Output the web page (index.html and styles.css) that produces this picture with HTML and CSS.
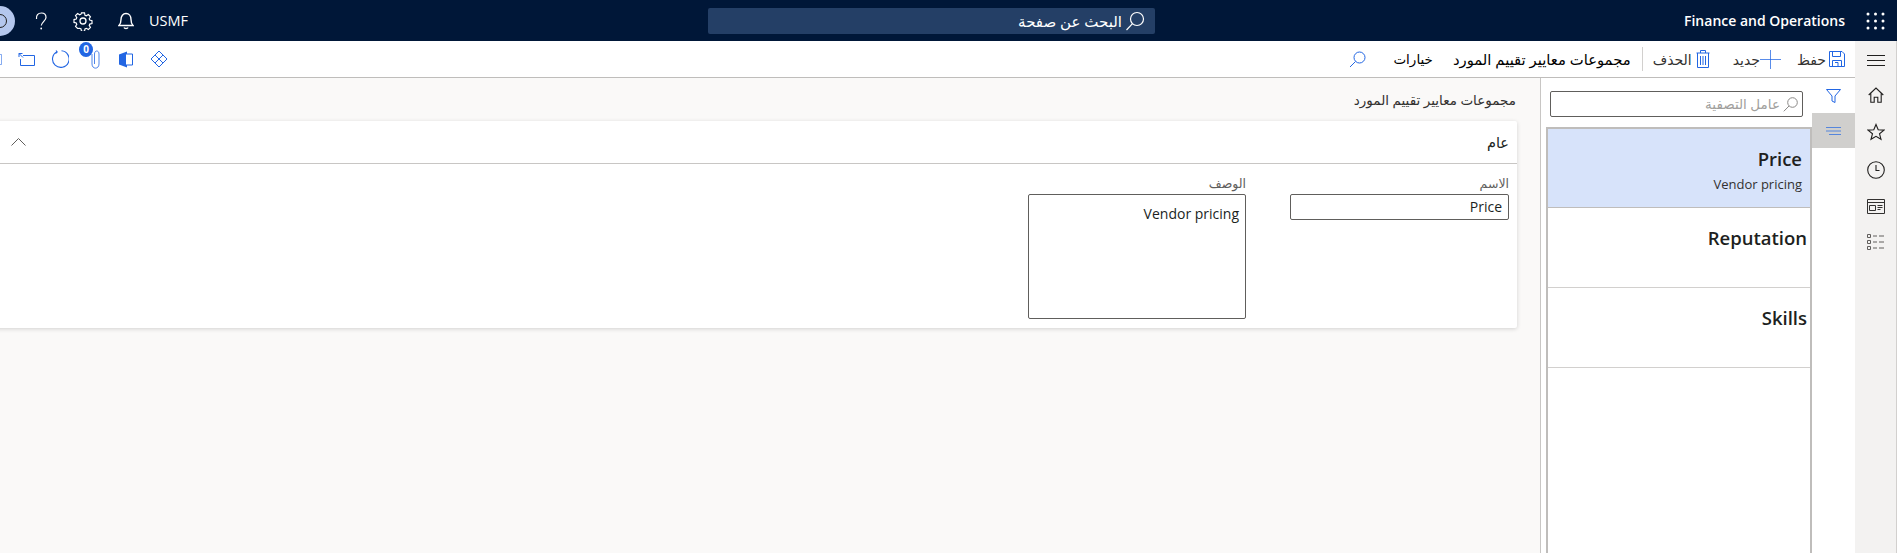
FILE: index.html
```html
<!DOCTYPE html>
<html lang="ar" dir="rtl">
<head>
<meta charset="utf-8">
<title>مجموعات معايير تقييم المورد</title>
<link rel="stylesheet" href="styles.css">
</head>
<body>
<header class="topbar">
  <svg class="waffle" width="19" height="18" viewBox="0 0 19 18" fill="#fff"><circle cx="2" cy="2" r="1.5"/><circle cx="9.500" cy="2" r="1.5"/><circle cx="17" cy="2" r="1.5"/><circle cx="2" cy="9" r="1.5"/><circle cx="9.500" cy="9" r="1.5"/><circle cx="17" cy="9" r="1.5"/><circle cx="2" cy="16" r="1.5"/><circle cx="9.500" cy="16" r="1.5"/><circle cx="17" cy="16" r="1.5"/></svg>
  <div class="brand" dir="ltr">Finance and Operations</div>
  <div class="searchbar">
    <svg width="20" height="20" viewBox="0 0 20 20" fill="none" stroke="#fff" stroke-width="1.2"><circle cx="12" cy="8" r="6.5"/><path d="M7.5 12.7 1.5 19"/></svg>
    <span>البحث عن صفحة</span>
  </div>
  <div class="top-tools">
    <span class="company" dir="ltr">USMF</span>
    <svg class="bell" width="16" height="18" viewBox="0 0 16 18" fill="none" stroke="#fff" stroke-width="1.4"><path d="M1 13.5c1.5-1.5 2-3 2-6 0-3.5 2-6 5-6s5 2.500 5 6c0 3 .5 4.500 2 6z"/><path d="M6 15.500c.5 1.300 3.500 1.300 4 0"/></svg>
    <svg class="gear" width="20" height="20" viewBox="0 0 20 20" fill="none" stroke="#fff" stroke-width="1.3"><circle cx="10" cy="10" r="3"/><path d="M8.300 1h3.400l.5 2.600 1.500.7 2.300-1.400 2.300 2.400-1.400 2.200.6 1.500 2.500.6v3.200l-2.500.6-.6 1.500 1.400 2.200-2.300 2.400-2.300-1.400-1.500.7-.5 2.600H8.300l-.5-2.600-1.500-.7L4 18.300l-2.300-2.400 1.400-2.200-.6-1.500L0 11.600V8.400l2.500-.6.600-1.500-1.400-2.200L4 1.700l2.300 1.400 1.500-.7z" transform="translate(1 1) scale(.9)"/></svg>
    <svg class="help" width="12" height="18" viewBox="0 0 12 18" fill="none" stroke="#fff" stroke-width="1.2"><path d="M1.500 7C1 3.500 3 1 6.500 1s4.500 2.500 4.500 4.500c0 3-4 4-4.700 8"/><circle cx="6.200" cy="16.500" r=".9" fill="#fff" stroke="none"/></svg>
    <div class="avatar"><span class="avatar-ring"></span></div>
  </div>
</header>

<div class="shell">
  <nav class="sidenav">
    <svg width="18" height="11" viewBox="0 0 18 11" stroke="#201f1e"><path d="M0 .5h18M0 5.500h18M0 10.500h18"/></svg>
    <svg width="16" height="16" viewBox="0 0 16 16" fill="none" stroke="#201f1e" stroke-width="1.100"><path d="M.7 8 8 1l7.300 7M2.800 6.500v8.800h3.400v-5h3.600v5h3.400V6.500"/></svg>
    <svg width="18" height="18" viewBox="0 0 18 18" fill="none" stroke="#201f1e" stroke-width="1.100"><path d="m9 1.500 2.200 5.200 5.800.4-4.500 3.600 1.500 5.600L9 13.300l-5 3 1.500-5.600L1 7.100l5.800-.4z"/></svg>
    <svg width="18" height="18" viewBox="0 0 18 18" fill="none" stroke="#201f1e" stroke-width="1.100"><circle cx="9" cy="9" r="8.300"/><path d="M9 4v5.500h3.500"/></svg>
    <svg width="18" height="15" viewBox="0 0 18 15" fill="none" stroke="#323130"><path d="M.5.500h17v14H.5zM.5 3.500h17M2.500 6.500h6v5h-6zM10.500 6.500h5M10.500 8.500h5M10.500 10.500h3"/></svg>
    <svg width="17" height="16" viewBox="0 0 17 16" fill="none" stroke="#605e5c"><path d="M.5.500h3v3h-3zM.5 6.500h3v3h-3zM.5 12.500h3v3h-3zM6 2h4M12 2h5M6 8h4M12 8h5M6 14h4M12 14h5"/></svg>
  </nav>

  <div class="workspace">
    <div class="toolbar">
      <button class="cmd cmd-save">
        <svg width="16" height="16" viewBox="0 0 16 16" fill="none" stroke="#2266e3"><path d="M.5.500h12.500l2.500 2.500v12.500H.5z"/><path d="M3.500.500v5h8v-5M3.500 15.500v-6h9v6M6 11.500h3v4"/></svg>
        <span>حفظ</span>
      </button>
      <button class="cmd cmd-new">
        <svg width="21" height="21" viewBox="0 0 21 21" stroke="#2266e3" stroke-opacity=".75"><path d="M10.500 1v19M0 10.500h21"/></svg>
        <span>جديد</span>
      </button>
      <button class="cmd cmd-del">
        <svg width="14" height="18" viewBox="0 0 13 18" fill="none" stroke="#2266e3"><path d="M0 3h13M4 3V.5h5V3M1 3v14.500h11V3M4 6v9M6.500 6v9M9 6v9"/></svg>
        <span>الحذف</span>
      </button>
      <span class="divider"></span>
      <span class="menu-item">مجموعات معايير تقييم المورد</span>
      <span class="menu-item menu-short">خيارات</span>
      <svg class="find" width="17" height="17" viewBox="0 0 17 17" fill="none" stroke="#2266e3"><circle cx="10.500" cy="6.500" r="5.500"/><path d="M6.500 10.500 1 16"/></svg>

      <div class="quick">
        <span class="qbtn"><svg width="18" height="18" viewBox="0 0 18 18" fill="none" stroke="#2266e3"><path d="m9 1 8 8-8 8-8-8zM5 5l8 8M13 5l-8 8"/></svg></span>
        <span class="qbtn"><svg width="14" height="17" viewBox="0 0 14 17"><path d="M0 3.500 8 .5v16l-8-3z" fill="#2266e3"/><path d="M6.500 3H13.500v11H6.500z" fill="#fff" stroke="#2266e3"/></svg></span>
        <span class="qbtn attach">
          <svg width="9" height="19" viewBox="0 0 9 19" fill="none" stroke="#2266e3" stroke-opacity=".8"><path d="M1 4v10c0 5.500 7 5.500 7 0V4C8 0 3.500 0 3.500 4v10"/></svg>
          <b class="badge">0</b>
        </span>
        <span class="qbtn"><svg width="18" height="18" viewBox="0 0 18 18" fill="none" stroke="#2266e3" stroke-width="1.100"><path d="M6 1.700A8.300 8.300 0 1 0 10.500.8M5 .5l1.200 1.400L4.500 3.500"/></svg></span>
        <span class="qbtn"><svg width="17" height="13" viewBox="0 0 17 13" fill="none" stroke="#2266e3"><path d="M5 2.500h11.500v10H2.500V6M1 .5l4 4M1 .5v3.500M1 .500h3.500"/></svg></span>
        <span class="qbtn qbtn-clipped"><svg width="16" height="11" viewBox="0 0 16 11" fill="none" stroke="#2266e3" stroke-opacity=".55"><path d="M.5.500h15v10H.5z"/></svg></span>
      </div>
    </div>

    <div class="panes">
      <aside class="rail">
        <div class="rail-btn">
          <svg width="15" height="14" viewBox="0 0 15 14" fill="none" stroke="#2266e3"><path d="M.5.500h14L9 7v6.500L6 12V7z"/></svg>
        </div>
        <div class="rail-btn is-on">
          <svg width="15" height="10" viewBox="0 0 15 10" stroke="#2266e3" stroke-opacity=".7"><path d="M0 1.500h15M0 5h15M3 8.500h12"/></svg>
        </div>
      </aside>

      <section class="listpane">
        <div class="filter">
          <svg width="15" height="15" viewBox="0 0 15 15" fill="none" stroke="#8a8886"><circle cx="9.500" cy="5.500" r="4.800"/><path d="M6 9 .8 14.300"/></svg>
          <span>عامل التصفية</span>
        </div>
        <ul class="records">
          <li class="record is-active"><strong>Price</strong><small>Vendor pricing</small></li>
          <li class="record"><strong>Reputation</strong></li>
          <li class="record"><strong>Skills</strong></li>
        </ul>
      </section>

      <main class="main">
        <h1 class="page-title">مجموعات معايير تقييم المورد</h1>
        <article class="card">
          <header class="card-head">
            <h2>عام</h2>
            <svg width="15" height="8" viewBox="0 0 15 8" fill="none" stroke="#605e5c"><path d="m.5 7.500 7-7 7 7"/></svg>
          </header>
          <div class="card-body">
            <div class="field field-name">
              <label>الاسم</label>
              <div class="input" dir="ltr">Price</div>
            </div>
            <div class="field field-desc">
              <label>الوصف</label>
              <div class="input input-area" dir="ltr">Vendor pricing</div>
            </div>
          </div>
        </article>
      </main>
    </div>
  </div>
</div>
</body>
</html>
```

FILE: styles.css
```css
* { box-sizing: border-box; }
html, body { margin: 0; height: 553px; overflow: hidden; }
body { font-family: "Open Sans", "Noto Sans", "DejaVu Sans", sans-serif; font-size: 13px; color: #201f1e; background: #faf9f8; }
svg { display: block; flex: none; }

.topbar { height: 41px; background: #001738; color: #fff; display: flex; align-items: center; position: relative; }
.waffle { margin: 0 12px 0 0; }
.brand { font-size: 14px; font-weight: 600; margin-right: 22px; width: 160px; text-align: right; white-space: nowrap; }
.searchbar { width: 447px; height: 26px; margin-right: 529px; background: #243f66; border-radius: 2px; display: flex; align-items: center; gap: 3px; padding-right: 10px; font-size: 15px; }
.top-tools { flex: 1; display: flex; align-items: center; justify-content: flex-end; overflow: hidden; height: 41px; }
.company { font-size: 14.5px; width: 39px; margin-left: 15px; white-space: nowrap; }
.bell { margin-left: 25px; }
.gear { margin-left: 26px; }
.help { margin-left: 20px; }
.avatar { width: 30px; height: 30px; border-radius: 50%; background: #b4c7ee; margin-left: -15px; display: flex; align-items: center; justify-content: center; }
.avatar-ring { width: 14px; height: 14px; border: 1.500px solid #201f1e; border-radius: 50%; }

.shell { display: flex; height: 512px; }
.sidenav { width: 42px; flex: none; background: #f3f2f1; border-right: 1px solid #d2d0ce; display: flex; flex-direction: column; align-items: center; padding-top: 14px; gap: 20px; }
.sidenav svg:first-child { margin-bottom: 1px; }
.workspace { flex: 1; min-width: 0; display: flex; flex-direction: column; }

.toolbar { height: 37px; flex: none; background: #fff; border-bottom: 1px solid #bfbdbb; display: flex; align-items: center; padding-right: 10px; font-size: 14px; }
.cmd { display: flex; align-items: center; border: 0; background: none; padding: 0; font: inherit; color: #323130; }
.cmd-save { gap: 3px; }
.cmd-new { gap: 0; margin-right: 16px; }
.cmd-del { gap: 4px; margin-right: 23px; }
.divider { width: 1px; height: 24px; background: #d2d0ce; margin: 0 10px 0 11px; }
.menu-item { font-weight: 400; font-size: 14.800px; color: #000; white-space: nowrap; margin-left: 20px; }
.menu-short { font-size: 13.500px; }
.find { margin-right: 7px; }
.quick { flex: 1; display: flex; align-items: center; justify-content: flex-end; height: 36px; padding-left: 10px; overflow: hidden; }
.qbtn { width: 33px; flex: none; display: flex; justify-content: center; position: relative; }
.qbtn-clipped { margin-left: -33px; }
.attach { padding-left: 5px; }
.badge { position: absolute; top: -8px; left: 3px; width: 14px; height: 15px; border-radius: 50%; background: #2266e3; color: #fff; font-size: 10px; font-weight: 700; line-height: 15px; text-align: center; }

.panes { flex: 1; min-height: 0; display: flex; }
.rail { width: 43px; flex: none; background: #fff; }
.rail-btn { height: 35px; display: flex; align-items: center; justify-content: center; }
.rail-btn.is-on { background: #d0cfcd; }
.listpane { width: 272px; flex: none; background: #fff; border-left: 1px solid #c8c6c4; display: flex; flex-direction: column; padding: 13px 0 0 5px; }
.filter { height: 26px; margin: 0 9px 0 4px; border: 1px solid #605e5c; border-radius: 2px; display: flex; align-items: center; gap: 3px; padding-right: 4px; color: #a19f9d; font-size: 13.500px; }
.records { list-style: none; margin: 10px 0 0; padding: 0; flex: 1; border: solid #bfbdbb; border-width: 2px 2px 0 2px; }
.record { height: 80px; border-bottom: 1px solid #d2d0ce; padding: 19px 3px 0 0; direction: ltr; text-align: right; }
.record strong { display: block; font-size: 18.500px; font-weight: 600; line-height: 22px; color: #201f1e; }
.record small { display: block; font-size: 13px; line-height: 16px; margin-top: 6px; color: #323130; }
.record.is-active { background: #d7e3fa; height: 79px; padding-right: 8px; border-bottom-color: #bfbdbb; }

.main { flex: 1; min-width: 0; padding-right: 23px; overflow: hidden; }
.page-title { margin: 13px 1px 12px 0; font-size: 13.500px; font-weight: 400; line-height: 18px; color: #323130; }
.card { height: 207px; margin-left: -6px; background: #fff; border-radius: 2px; box-shadow: 0 1px 4px rgba(0, 0, 0, .16); }
.card-head { height: 43px; border-bottom: 1px solid #c8c6c4; display: flex; align-items: center; justify-content: space-between; padding: 0 8px 0 17px; }
.card-head h2 { margin: 0; font-size: 14.500px; font-weight: 400; color: #201f1e; }
.card-body { display: flex; padding: 11px 8px 0 0; gap: 44px; }
.field { display: flex; flex-direction: column; }
.field label { font-size: 12.500px; line-height: 18px; color: #605e5c; height: 19px; }
.field-name { width: 219px; }
.field-desc { width: 218px; }
.input { height: 26px; border: 1px solid #605e5c; border-radius: 2px; background: #fff; text-align: right; padding: 2px 6px 0; font-size: 14px; line-height: 20px; color: #201f1e; }
.input-area { height: 125px; padding-top: 9px; }
```
